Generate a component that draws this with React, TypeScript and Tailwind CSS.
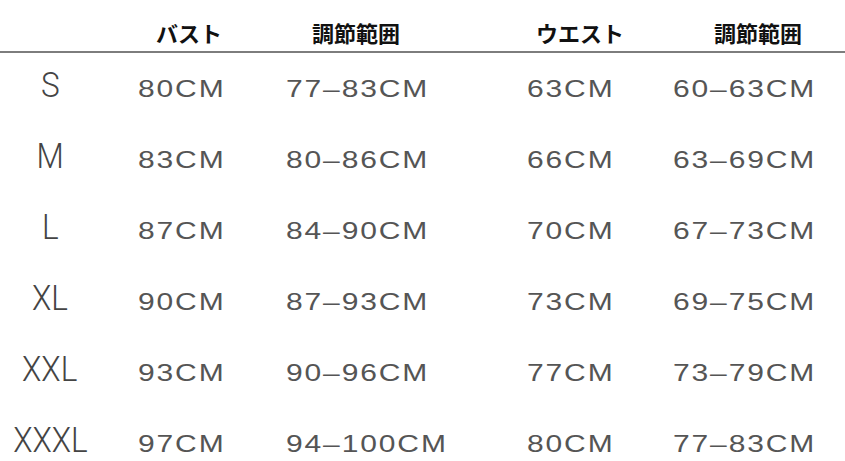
import React from "react";

const rows = [
  ["S", "80CM", "77–83CM", "63CM", "60–63CM"],
  ["M", "83CM", "80–86CM", "66CM", "63–69CM"],
  ["L", "87CM", "84–90CM", "70CM", "67–73CM"],
  ["XL", "90CM", "87–93CM", "73CM", "69–75CM"],
  ["XXL", "93CM", "90–96CM", "77CM", "73–79CM"],
  ["XXXL", "97CM", "94–100CM", "80CM", "77–83CM"],
];

function Val({ t }: { t: string }) {
  return (
    <span className="inline-block origin-left scale-x-[1.25] font-['Liberation_Sans',Arial,sans-serif] text-[24px] leading-none tracking-[1.5px] text-[#555] -ml-[1px]">
      {t}
    </span>
  );
}

export default function App() {
  return (
    <div className="w-[845px] h-[461px] overflow-hidden bg-white">
      <div className="flex h-[51px] pt-[21px] font-['Noto_Sans_CJK_JP',sans-serif] text-[22px] leading-none font-semibold text-[#111]">
        <div className="w-[156px]" />
        <div className="w-[156px]">バスト</div>
        <div className="w-[224px]">調節範囲</div>
        <div className="w-[178px]">ウエスト</div>
        <div>調節範囲</div>
      </div>
      <div className="h-[2px] bg-[#7d7d7d]" />
      <div className="pt-[15px]">
        {rows.map((r) => (
          <div
            key={r[0]}
            className="grid grid-cols-[139px_148px_241px_146px_1fr] items-baseline h-[71px]"
          >
            <div className="pr-[39px] text-center">
              <span className="inline-block scale-x-[0.9] font-['Roboto',sans-serif] font-light text-[35px] leading-none text-[#444]">
                {r[0]}
              </span>
            </div>
            <div><Val t={r[1]} /></div>
            <div><Val t={r[2]} /></div>
            <div><Val t={r[3]} /></div>
            <div><Val t={r[4]} /></div>
          </div>
        ))}
      </div>
    </div>
  );
}
